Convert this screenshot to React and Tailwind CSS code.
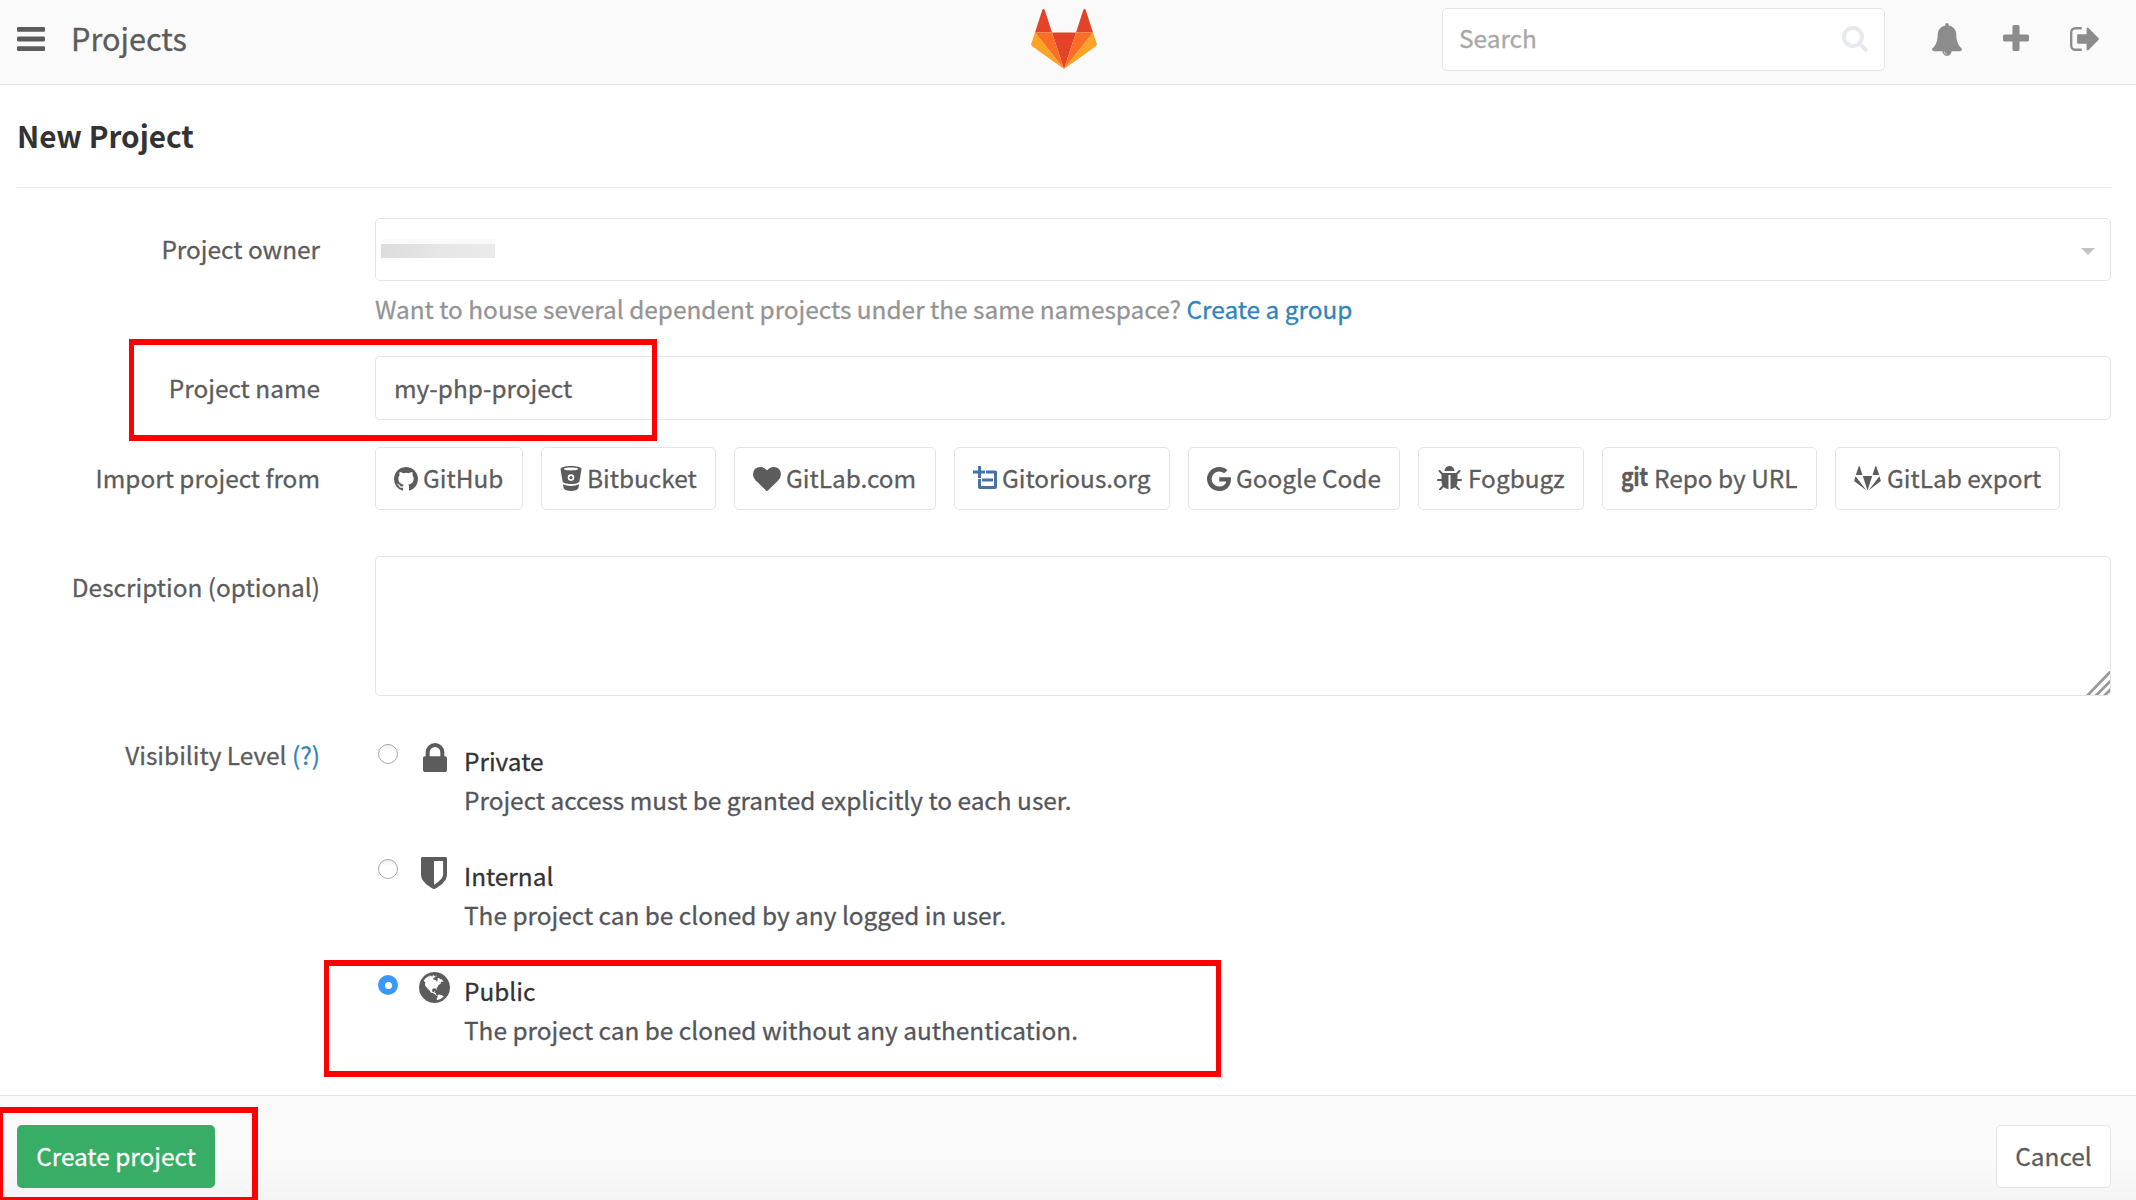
import React from "react";

const P = {
  bars: "M1664 1344v128q0 26-19 45t-45 19h-1408q-26 0-45-19t-19-45v-128q0-26 19-45t45-19h1408q26 0 45 19t19 45zm0-512v128q0 26-19 45t-45 19h-1408q-26 0-45-19t-19-45v-128q0-26 19-45t45-19h1408q26 0 45 19t19 45zm0-512v128q0 26-19 45t-45 19h-1408q-26 0-45-19t-19-45v-128q0-26 19-45t45-19h1408q26 0 45 19t19 45z",
  bell: "M912 1696q0-16-16-16-59 0-101.500-42.500t-42.500-101.500q0-16-16-16t-16 16q0 73 51.500 124.500t124.500 51.500q16 0 16-16zm816-288q0 52-38 90t-90 38h-448q0 106-75 181t-181 75-181-75-75-181h-448q-52 0-90-38t-38-90q50-42 91-88t85-119.500 74.500-158.500 50-206 19.500-260q0-152 117-282.500t307-158.500q-8-19-8-39 0-40 28-68t68-28 68 28 28 68q0 20-8 39 190 28 307 158.500t117 282.500q0 139 19.500 260t50 206 74.500 158.500 85 119.500 91 88z",
  search: "M1216 832q0-185-131.500-316.500t-316.500-131.500-316.500 131.500-131.500 316.500 131.500 316.500 316.500 131.500 316.500-131.500 131.500-316.500zm512 832q0 52-38 90t-90 38q-54 0-90-38l-343-342q-179 124-399 124-143 0-273.500-55.500t-225-150-150-225-55.500-273.500 55.500-273.500 150-225 225-150 273.500-55.500 273.500 55.500 225 150 150 225 55.500 273.500q0 220-124 399l343 343q37 37 37 90z",
  plus: "M1600 736v192q0 40-28 68t-68 28h-416v416q0 40-28 68t-68 28h-192q-40 0-68-28t-28-68v-416h-416q-40 0-68-28t-28-68v-192q0-40 28-68t68-28h416v-416q0-40 28-68t68-28h192q40 0 68 28t28 68v416h416q40 0 68 28t28 68z",
  signOut: "M704 1440q0 4 1 20t.5 26.500-3 23.500-10 19.500-20.500 6.500h-320q-119 0-203.500-84.500t-84.500-203.500v-704q0-119 84.500-203.500t203.500-84.500h320q13 0 22.500 9.500t9.500 22.500q0 4 1 20t.5 26.500-3 23.500-10 19.500-20.500 6.500h-320q-66 0-113 47t-47 113v704q0 66 47 113t113 47h312l11.500 1 11.500 3 8 5.500 7 9 2 13.500zm928-544q0 26-19 45l-544 544q-19 19-45 19t-45-19-19-45v-288h-448q-26 0-45-19t-19-45v-384q0-26 19-45t45-19h448v-288q0-26 19-45t45-19 45 19l544 544q19 19 19 45z",
  lock: "M640 768h512v-192q0-106-75-181t-181-75-181 75-75 181v192zm832 96v576q0 40-28 68t-68 28h-960q-40 0-68-28t-28-68v-576q0-40 28-68t68-28h32v-192q0-184 132-316t316-132 316 132 132 316v192h32q40 0 68 28t28 68z",
  shield: "M1344 960v-640h-448v1137q119-63 213-137 235-184 235-360zm192-768v768q0 86-33.500 170.500t-83 150-118 127.500-126.500 103-121 77.500-89.500 49.500-42.500 20q-12 6-26 6t-26-6q-16-7-42.500-20t-89.500-49.500-121-77.500-126.500-103-118-127.500-83-150-33.500-170.500v-768q0-26 19-45t45-19h1152q26 0 45 19t19 45z",
  heart: "M896 1664q-26 0-44-18l-624-602q-10-8-27.500-26t-55.500-65.500-68-97.500-53.500-121-23.500-138q0-220 127-344t351-124q62 0 126.500 21.500t120 58 95.500 68.500 76 68q36-36 76-68t95.500-68.500 120-58 126.500-21.500q224 0 351 124t127 344q0 221-229 450l-623 600q-18 18-44 18z",
  globe: "M896 128q209 0 385.500 103t279.500 279.500 103 385.500-103 385.500-279.500 279.500-385.500 103-385.500-103-279.500-279.500-103-385.500 103-385.500 279.500-279.500 385.500-103zm274 521q-2 1-9.500 9.500t-13.500 9.500q2 0 4.500-5t5-11 3.500-7q6-7 22-15 14-6 52-12 34-8 51 11-2-2 9.500-13t14.500-12q3-2 15-4.500t15-7.500l2-22q-12 1-17.500-7t-6.500-21q0 2-6 8 0-7-4.500-8t-11.500 1-9 1q-10-3-15-7.500t-8-16.500-4-15q-2-5-9.500-11t-9.500-10q-1-2-2.500-5.500t-3-6.500-4-5.500-5.500-2.500-7 5-7.500 10-4.500 5q-3-2-6-1.500t-4.500 1-4.500 3-5 3.500q-3 2-8.500 3t-8.500 2q15-5-1-11-10-4-16-3 9-4 7.500-12t-8.500-14h5q-1-4-8.500-8.500t-17.500-8.500-13-6q-8-5-34-9.500t-33-.5q-5 6-4.500 10.500t4 14 3.500 12.500q1 6-5.500 13t-6.500 12q0 7 14 15.500t10 21.500q-3 8-16 16t-16 12q-5 8-1.500 18.500t10.500 16.500q2 2 1.500 4t-3.500 4.500-5.500 4-6.500 3.500l-3 2q-11 5-20.500-6t-13.500-26q-7-25-16-30-23-8-29 1-5-13-41-26-25-9-58-4 6-1 0-15-7-15-19-12 3-6 4-17.500t1-13.500q3-13 12-23 1-1 7-8.500t9.500-13.500.5-6q35 4 50-11 5-5 11.500-17t10.500-17q9-6 14-5.500t14.500 5.500 14.500 5q14 1 15.500-11t-7.500-20q12 1 3-17-4-7-8-9-12-4-27 5-8 4 2 8-1-1-9.500 10.500t-16.500 17.500-16-5q-1-1-5.500-13.500t-9.500-13.500q-8 0-16 15 3-8-11-15t-24-8q19-12-8-27-7-4-20.500-5t-19.500 4q-5 7-5.500 11.500t5 8 10.500 5.500 11.500 4 8.500 3q14 10 8 14-2 1-8.500 3.500t-11.500 4.500-6 4q-3 4 0 14t-2 14q-5-5-9-17.500t-7-16.500q7 9-25 6l-10-1q-4 0-16 2t-20.500 1-13.500-8q-4-8 0-20 1-4 4-2-4-3-11-9.500t-10-8.500q-46 15-94 41 6 1 12-1 5-2 13-6.500t10-5.500q34-14 42-7l5-5q14 16 20 25-7-4-30-1-20 6-22 12 7 12 5 18-4-3-11.500-10t-14.500-11-15-5q-16 0-22 1-146 80-235 222 7 7 12 8 4 1 5 9t2.500 11 11.500-3q9 8 3 19 1-1 44 27 19 17 21 21 3 11-10 18-1-2-9-9t-9-4q-3 5 .5 18.500t10.500 12.500q-7 0-9.500 16t-2.500 35.500-1 23.500l2 1q-3 12 5.500 34.500t21.500 19.500q-13 3 20 43 6 8 8 9 3 2 12 7.500t15 10 10 10.500q4 5 10 22.500t14 23.500q-2 6 9.500 20t10.500 23q-1 0-2.500 1t-2.500 1q3 7 15.500 14t15.500 13q1 3 2 10t3 11 8 2q2-20-24-62-15-25-17-29-3-5-5.500-15.500t-4.500-14.500q2 0 6 1.500t8.500 3.500 7.500 4 2 3q-3 7 2 17.500t12 18.500 17 19 12 13q6 6 14 19.500t0 13.500q9 0 20 10.500t17 19.500q5 8 8 26t5 24q2 7 8.500 13.500t12.500 9.500l16 8 13 7q5 2 18.500 10.500t21.500 11.500q10 4 16 4t14.500-2.500 13.500-3.500q15-2 29 15t21 21q36 19 55 11-2 1 .5 7.500t8 15.500 9 14.500 5.500 8.500q5 6 18 15t18 15q6-4 7-9-3 8 7 20t18 10q14-3 14-32-31 15-49-18 0-1-2.500-5.500t-4-8.500-2.500-8.500 0-7.500 5-3q9 0 10-3.500t-2-12.500-4-13q-1-8-11-20t-12-15q-5 9-16 8t-16-9q0 1-1.500 5.500t-1.500 6.500q-13 0-15-1 1-3 2.500-17.500t3.500-22.500q1-4 5.500-12t7.500-14.500 4-12.500-4.500-9.500-17.500-2.500q-19 1-26 20-1 3-3 10.500t-5 11.500-9 7q-7 3-24 2t-24-5q-13-8-22.500-29t-9.500-37q0-10 2.500-26.500t3-25-5.500-24.500q3-2 9-9.500t10-10.500q2-1 4.500-1.500t4.500 0 4-1.500 3-6q-1-1-4-3-3-3-4-3 7 3 28.500-1.500t27.500 1.500q15 11 22-2 0-1-2.500-9.500t-.5-13.500q5 27 29 9 3 3 15.500 5t17.500 5q3 2 7 5.500t5.500 4.500 5-.5 8.500-6.500q10 14 12 24 11 40 19 44 7 3 11 2t4.500-9.500 0-14-1.500-12.500l-1-8v-18l-1-8q-15-3-18.500-12t1.500-18.500 15-18.500q1-1 8-3.500t15.500-6.500 12.500-8q21-19 15-35 7 0 11-9-1 0-5-3t-7.500-5-4.500-2q9-5 2-16 5-3 7.500-11t7.500-10q9 12 21 2 8-8 1-16 5-7 20.500-10.500t18.500-9.500q7 2 8-2t1-12 3-12q4-5 15-9t13-5l17-11q3-4 0-4 18 2 31-11 10-11-6-20 3-6-3-9.500t-15-5.500q3-1 11.500-.5t10.500-1.500q15-10-7-16-17-5-43 12zm-163 877q206-36 351-189-3-3-12.500-4.500t-12.500-3.500q-18-7-24-8 1-7-2.500-13t-8-9-12.500-8-11-7q-2-2-7-6t-7-5.500-7.500-4.500-8.500-2-10 1l-3 1q-3 1-5.500 2.500t-5.500 3-4 3 0 2.500q-21-17-36-22-5-1-11-5.500t-10.500-7-10-1.500-11.500 7q-5 5-6 15t-2 13q-7-5 0-17.500t2-18.500q-3-6-10.500-4.500t-12 4.500-11.500 8.500-9 6.500-8.500 5.500-8.500 7.500q-3 4-6 12t-5 11q-2-4-11.500-6.500t-9.500-5.500q2 10 4 35t5 38q7 31-12 48-27 25-29 40-4 22 12 26 0 7-8 20.500t-7 21.500q0 6 2 16z",
  github: "M896 128q209 0 385.500 103t279.500 279.500 103 385.500q0 251-146.500 451.500t-378.500 277.500q-27 5-40-7t-13-30q0-3 .5-76.500t.5-134.500q0-97-52-142 57-6 102.500-18t94-39 81-66.500 53-105 20.500-150.500q0-119-79-206 37-91-8-204-28-9-81 11t-92 44l-38 24q-93-26-192-26t-192 26q-16-11-42.500-27t-83.500-38.500-85-13.500q-45 113-8 204-79 87-79 206 0 85 20.500 150t52.500 105 80.500 67 94 39 102.500 18q-39 36-49 103-21 10-45 15t-57 5-65.500-21.500-55.500-62.500q-19-32-48.500-52t-49.500-24l-20-3q-21 0-29 4.500t-5 11.500 9 14 13 12l7 5q22 10 43.500 38t31.500 51l10 23q13 38 44 61.500t67 30 69.500 7 55.500-3.500l23-4q0 38 .5 88.500t.5 54.500q0 18-13 30t-40 7q-232-77-378.500-277.500t-146.500-451.500q0-209 103-385.500t279.500-279.500 385.500-103zm-477 1103q3-7-7-12-10-3-13 2-3 7 7 12 9 6 13-2zm31 34q7-5-2-16-10-9-16-3-7 5 2 16 10 10 16 3zm30 45q9-7 0-19-8-13-17-6-9 5 0 18t17 7zm42 42q8-8-4-19-12-12-20-3-9 8 4 19 12 12 20 3zm57 25q3-11-13-16-15-4-19 7t13 15q15 6 19-6zm63 5q0-13-17-11-16 0-16 11 0 13 17 11 16 0 16-11zm58-10q-2-11-18-9-16 3-14 15t18 8 14-14z",
  bug: "M1696 960q0 26-19 45t-45 19h-224q0 171-67 290l208 209q19 19 19 45t-19 45q-18 19-45 19t-45-19l-198-197q-5 5-15 13t-42 28.500-65 36.500-82 29-97 13v-896h-128v896q-51 0-101.500-13.500t-87-33-66-39-43.500-32.500l-15-14-183 207q-20 21-48 21-24 0-43-16-19-18-20.500-44.500t15.500-46.500l202-227q-58-114-58-274h-224q-26 0-45-19t-19-45 19-45 45-19h224v-294l-173-173q-19-19-19-45t19-45 45-19 45 19l173 173h844l173-173q19-19 45-19t45 19 19 45-19 45l-173 173v294h224q26 0 45 19t19 45zm-480-576h-640q0-133 93.500-226.500t226.500-93.500 226.500 93.500 93.500 226.500z",
  google: "M896 786h725q12 67 12 128 0 217-91 387.500t-259.500 266.500-386.500 96q-157 0-299-60.500t-245-163.500-163.500-245-60.500-299 60.500-299 163.500-245 245-163.500 299-60.500q300 0 515 201l-209 201q-123-119-306-119-129 0-238.500 65t-173.500 176.500-64 243.500 64 243.500 173.500 176.500 238.500 65q87 0 160-24t120-60 82-82 51.500-87 22.500-78h-436v-264z",
};

/* Glyph cropped to its own bounding box: box = viewBox, size comes from className */
function Glyph({ d, box, className }) {
  return (
    <svg viewBox={box} preserveAspectRatio="none" fill="currentColor" className={"shrink-0 " + className}>
      <path d={d} />
    </svg>
  );
}

function Tanuki() {
  return (
    <svg viewBox="0 0 66 60" className="h-[60px] w-[66px]">
      <path fill="#e24329" d="M4 23.500L11.300 1Q12.500-1 13.700 1L21 23.500zM45 23.500L52.300 1Q53.500-1 54.700 1L62 23.500zM21 23.500h24L33 60z" />
      <path fill="#fc6d26" d="M4 23.500h17L33 60zM62 23.500H45L33 60z" />
      <path fill="#fca326" d="M4 23.500L.3 34.500Q-.2 36.200 1.200 37.200L33 60zM62 23.500l3.700 11q.5 1.700-.9 2.700L33 60z" />
    </svg>
  );
}

function MonoTanuki() {
  return (
    <svg viewBox="0 0 27 25" fill="currentColor" className="h-[25px] w-[27px] shrink-0">
      <path d="M1.800 9L4.700.4Q5.200-.4 5.700.4L8.500 9zM18.500 9L21.300.4Q21.800-.4 22.300.4L25.200 9zM8.800 10h9.400l-4.700 14.500zM1.600 10.300L12.300 24.200.7 15.600Q.1 15 .3 14.200zM25.400 10.300L14.700 24.200l11.600-8.600Q26.900 15 26.700 14.200z" />
    </svg>
  );
}

function Bucket() {
  return (
    <svg viewBox="0 0 22 25" fill="currentColor" className="h-[25px] w-[22px] shrink-0">
      <path fillRule="evenodd" d="M11 0C17 0 21.700 1.300 21.500 3.200L19.400 15.500C18.900 17.200 15.200 18 11 18S3.100 17.200 2.600 15.500L.5 3.200C.3 1.300 5 0 11 0zM11 1.600c-4.300 0-7 .6-7 1.400s2.700 1.400 7 1.400 7-.6 7-1.400-2.700-1.400-7-1.400zM11 8.300a3.300 3.300 0 1 0 0 6.600 3.300 3.300 0 0 0 0-6.600z" />
      <circle cx="11" cy="11.600" r="1.600" />
      <path d="M2.900 18.200Q6.500 20 11 20t8.100-1.800l-.8 4C17.500 24 14.500 25 11 25s-6.500-1-7.300-2.800z" />
    </svg>
  );
}

function Gitorious() {
  return (
    <svg viewBox="0 0 24 23" fill="#4772a6" className="mb-[2px] h-[23px] w-[24px] shrink-0">
      <path d="M5 0h3v4.500h4v3H8V12H5V7.500H0v-3h5zM13 4.500h9.500q1.500 0 1.500 1.500v15q0 2-2 2H7q-2 0-2-2v-8h3v7h13V7.500h-8zM9 12.500h11v3H9z" />
    </svg>
  );
}

const providers = [
  { name: "GitHub", w: "w-[148px]", gap: "gap-[5px]", icon: <Glyph d={P.github} box="128 128 1536 1526" className="h-[24px] w-[24px]" /> },
  { name: "Bitbucket", w: "w-[175px]", gap: "gap-[5px]", icon: <Bucket /> },
  { name: "GitLab.com", w: "w-[202px]", gap: "gap-[5px]", icon: <Glyph d={P.heart} box="0 128 1792 1536" className="h-[24px] w-[28px]" /> },
  { name: "Gitorious.org", w: "w-[216px]", gap: "gap-[5px]", icon: <Gitorious /> },
  { name: "Google Code", w: "w-[212px]", gap: "gap-[5px]", icon: <Glyph d={P.google} box="128 128 1505 1536" className="h-[24px] w-[24px]" /> },
  { name: "Fogbugz", w: "w-[166px]", gap: "gap-[6px]", icon: <Glyph d={P.bug} box="96 64 1600 1536" className="mb-[2px] h-[24px] w-[25px]" /> },
  {
    name: "Repo by URL",
    w: "w-[215px]",
    gap: "gap-[7px]",
    icon: <span className="mb-[8px] w-[26px] shrink-0 origin-left scale-x-[0.85] text-[25px] leading-[26px] font-bold -tracking-[0.5px]">git</span>,
  },
  { name: "GitLab export", w: "w-[225px]", gap: "gap-[6px]", icon: <MonoTanuki /> },
];

const levels = [
  {
    title: "Private",
    text: "Project access must be granted explicitly to each user.",
    icon: <Glyph d={P.lock} box="320 128 1152 1408" className="mb-[3px] h-[29px] w-[24px]" />,
  },
  {
    title: "Internal",
    text: "The project can be cloned by any logged in user.",
    icon: <Glyph d={P.shield} box="256 128 1280 1536" className="mr-px mb-[2px] h-[32px] w-[26px]" />,
  },
  {
    title: "Public",
    text: "The project can be cloned without any authentication.",
    checked: true,
    icon: <Glyph d={P.globe} box="128 128 1536 1536" className="mb-[2px] h-[31px] w-[31px]" />,
  },
];

function Radio({ checked }) {
  return checked ? (
    <span className="mt-[5px] flex size-5 shrink-0 items-center justify-center rounded-full bg-[#3b99fc]">
      <span className="size-[7px] rounded-full bg-white" />
    </span>
  ) : (
    <span className="mt-[4px] size-5 shrink-0 rounded-full border border-[#a9a9a9] bg-white bg-gradient-to-b from-[#f0f0f0] to-white to-40%" />
  );
}

function Label({ children, className = "pt-[13px]" }) {
  return <label className={"mr-[55px] w-[303px] shrink-0 text-right whitespace-nowrap " + className}>{children}</label>;
}

export default function App() {
  return (
    <div className="relative flex h-[1200px] w-[2136px] flex-col overflow-hidden bg-white font-['Noto_Sans_CJK_SC',sans-serif] text-[24.4px] leading-[36px] text-[#5c5c5c] [-webkit-text-stroke:0.3px]">
      <header className="grid h-[85px] shrink-0 grid-cols-[1031px_66px_1fr] border-b border-[#e5e5e5] bg-[#fafafa]">
        <div className="flex items-start pt-[27px] pl-[17px]">
          <Glyph d={P.bars} box="128 256 1536 1280" className="h-[24px] w-[28px]" />
          <h1 className="-mt-[9px] ml-[26px] text-[30.700px] leading-[40px] whitespace-nowrap">Projects</h1>
        </div>
        <div className="pt-[9px]">
          <Tanuki />
        </div>
        <div className="flex pt-[8px] pl-[345px] text-[#8c8c8c]">
          <div className="flex h-[63px] w-[443px] items-center justify-between rounded-[5px] border border-[#e5e5e5] bg-white pr-[16px] pl-[16px] text-[#a8a8a8]">
            <span className="mb-[3px]">Search</span>
            <Glyph d={P.search} box="64 128 1664 1664" className="mb-[2px] h-[26px] w-[26px] text-[#e7e9ed]" />
          </div>
          <Glyph d={P.bell} box="64 0 1664 1792" className="mt-[15px] ml-[47px] h-[33px] w-[30px]" />
          <Glyph d={P.plus} box="192 128 1408 1408" className="mt-[17px] ml-[41px] h-[26px] w-[26px]" />
          <Glyph d={P.signOut} box="64 256 1568 1280" className="mt-[19px] ml-[41px] h-[24px] w-[29px]" />
        </div>
      </header>

      <main className="flex grow flex-col px-[17px] pr-[25px]">
        <h2 className="h-[103px] border-b border-[#efefef] pt-[31px] text-[29.700px] leading-[40px] font-bold text-[#333] [-webkit-text-stroke:0]">New Project</h2>

        <section className="mt-[30px] flex">
          <Label>Project owner</Label>
          <div className="grow">
            <div className="flex h-[63px] items-center justify-between rounded-[5px] border border-[#e5e5e5] pr-[15px] pl-[5px]">
              <span className="mb-[2px] flex w-[114px] flex-col">
                <span className="h-[5px] bg-[#fafafa]" />
                <span className="h-[14px] bg-gradient-to-r from-[#dcdcdc] via-[#e6e6e6] to-[#ebebeb]" />
              </span>
              <svg viewBox="0 0 14 7" className="mt-[3px] h-[7px] w-[14px]" fill="#c4c4c4">
                <path d="M0 0h14L7 7z" />
              </svg>
            </div>
            <p className="mt-[10px] text-[#959494]">
              Want to house several dependent projects under the same namespace? <a className="text-[#3084bb]">Create a group</a>
            </p>
          </div>
        </section>

        <section className="mt-[29px] flex">
          <Label className="pt-[14px]">Project name</Label>
          <div className="flex h-[64px] grow items-center rounded-[5px] border border-[#e5e5e5] pb-px pl-[18px]">my-php-project</div>
        </section>

        <section className="mt-[27px] flex">
          <Label>Import project from</Label>
          <div className="flex gap-[18px]">
            {providers.map((p) => (
              <div key={p.name} className={"flex h-[63px] items-center rounded-[5px] border border-[#e5e5e5] pl-[18px] whitespace-nowrap " + p.w + " " + p.gap}>
                {p.icon}
                <span className="mb-[2px]">{p.name}</span>
              </div>
            ))}
          </div>
        </section>

        <section className="mt-[46px] flex">
          <Label>Description (optional)</Label>
          <div className="flex h-[140px] grow items-end justify-end rounded-[5px] border border-[#e5e5e5]">
            <svg viewBox="0 0 24 24" className="size-6" stroke="#9a9a9a" strokeWidth="2.800" fill="none">
              <path d="M1 25L25 0M9.500 25L25 9.500M18 25l7-7" />
            </svg>
          </div>
        </section>

        <section className="mt-[44px] flex">
          <Label className="-mt-[3px]">
            Visibility Level <a className="text-[#3084bb]">(?)</a>
          </Label>
          <div className="ml-[3px] flex flex-col">
            {levels.map((l) => (
              <div key={l.title} className="flex h-[115px]">
                <Radio checked={l.checked} />
                <span className="ml-[20px] flex h-[37px] w-[33px] items-center justify-center">{l.icon}</span>
                <div className="-mt-[4px] ml-[13px] pt-[5px] leading-[39px] whitespace-nowrap">
                  <div className="text-[#333]">{l.title}</div>
                  <div className="text-[#54565b]">{l.text}</div>
                </div>
              </div>
            ))}
          </div>
        </section>
      </main>

      <footer className="flex h-[105px] shrink-0 justify-between border-t border-[#e5e5e5] bg-[#fafafa] bg-gradient-to-b from-[#fafafa] from-60% to-[#f4f4f4] pt-[29px] pr-[25px] pl-[17px]">
        <button className="h-[63px] w-[198px] rounded-[5px] bg-[#38ad66] pb-[2px] text-white">Create project</button>
        <button className="h-[63px] w-[115px] rounded-[5px] border border-[#e5e5e5] bg-white pb-[2px]">Cancel</button>
      </footer>

      {/* Annotation frames laid over the form */}
      <div className="absolute top-[339px] left-[129px] h-[102px] w-[528px] border-x-[5px] border-y-[6px] border-[#f00]" />
      <div className="absolute top-[960px] left-[324px] h-[117px] w-[897px] border-x-[5px] border-y-[6px] border-[#f00]" />
      <div className="absolute top-[1107px] left-[-3px] h-[96px] w-[261px] border-6 border-[#f00]" />
    </div>
  );
}
